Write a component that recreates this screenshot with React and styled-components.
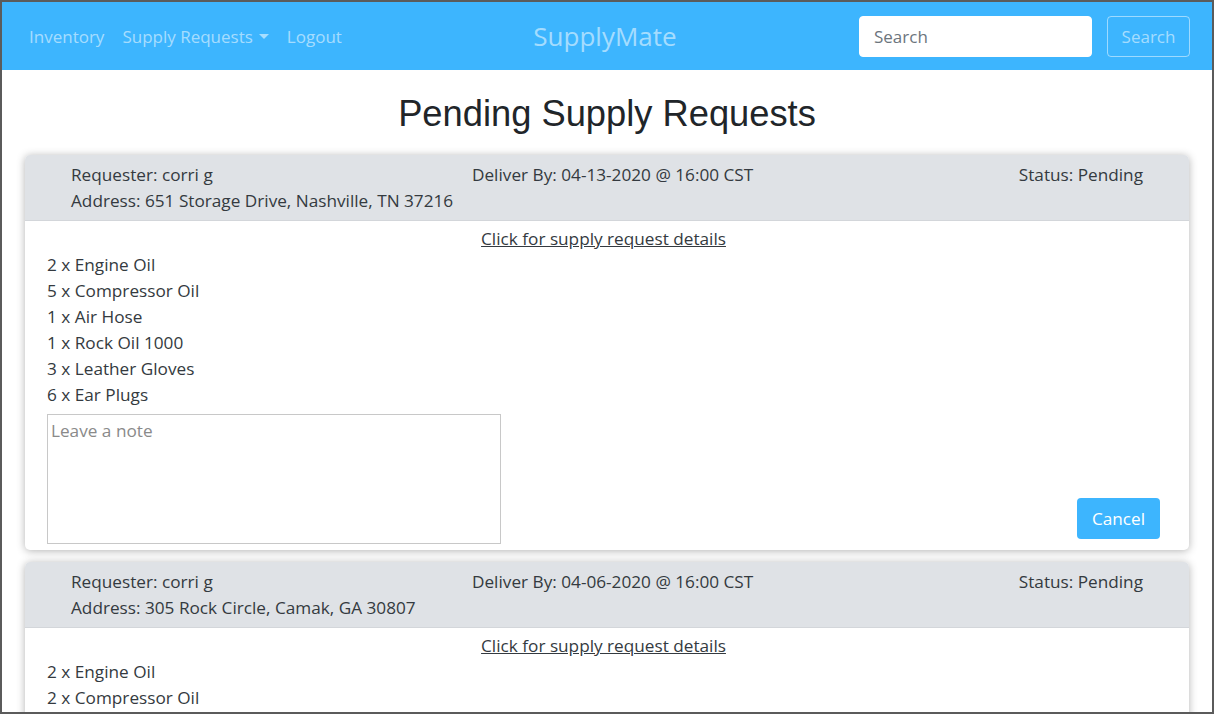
import styled, { createGlobalStyle } from 'styled-components';

const requests = [
  {
    requester: 'corri g',
    address: '651 Storage Drive, Nashville, TN 37216',
    deliverBy: '04-13-2020 @ 16:00 CST',
    status: 'Pending',
    items: [
      [2, 'Engine Oil'],
      [5, 'Compressor Oil'],
      [1, 'Air Hose'],
      [1, 'Rock Oil 1000'],
      [3, 'Leather Gloves'],
      [6, 'Ear Plugs'],
    ],
  },
  {
    requester: 'corri g',
    address: '305 Rock Circle, Camak, GA 30807',
    deliverBy: '04-06-2020 @ 16:00 CST',
    status: 'Pending',
    items: [
      [2, 'Engine Oil'],
      [2, 'Compressor Oil'],
      [1, 'Air Hose'],
    ],
  },
];

const App = () => {
  return (
    <>
      <GlobalStyle />
      <Frame>
        <Navbar>
          <NavLinks>
            <NavItem>Inventory</NavItem>
            <NavItem>
              Supply Requests <Caret />
            </NavItem>
            <NavItem>Logout</NavItem>
          </NavLinks>
          <Brand>SupplyMate</Brand>
          <SearchForm>
            <SearchInput placeholder="Search" />
            <SearchButton>Search</SearchButton>
          </SearchForm>
        </Navbar>
        <Main>
          <Title>Pending Supply Requests</Title>
          {requests.map((req, i) => (
            <Card key={i}>
              <CardHeader>
                <div>
                  <div>Requester: {req.requester}</div>
                  <div>Address: {req.address}</div>
                </div>
                <div>Deliver By: {req.deliverBy}</div>
                <div>Status: {req.status}</div>
              </CardHeader>
              <CardBody>
                <DetailsLink>Click for supply request details</DetailsLink>
                {req.items.map(([qty, name]) => (
                  <Item key={name}>
                    {qty} x {name}
                  </Item>
                ))}
                <Actions>
                  <Note placeholder="Leave a note" />
                  <CancelButton>Cancel</CancelButton>
                </Actions>
              </CardBody>
            </Card>
          ))}
        </Main>
      </Frame>
    </>
  );
};

const GlobalStyle = createGlobalStyle`
  html, body {
    margin: 0;
    padding: 0;
    overflow: hidden;
  }
  body {
    font-family: "Open Sans", "Noto Sans", sans-serif;
    color: #212529;
  }
`;

const Frame = styled.div`
  box-sizing: border-box;
  width: 1214px;
  height: 714px;
  border: 2px solid #5b5b5b;
  overflow: hidden;
  background: #fff;
`;

const Navbar = styled.nav`
  height: 68px;
  background: #3db5fe;
  display: grid;
  grid-template-columns: 1fr auto 1fr;
  align-items: center;
  padding: 0 22px 0 18px;
`;

const NavLinks = styled.div`
  display: flex;
  align-items: center;
`;

const NavItem = styled.a`
  color: rgba(255, 255, 255, 0.55);
  font-size: 17px;
  padding: 0 9px;
  display: flex;
  align-items: center;
  cursor: pointer;
`;

const Caret = styled.span`
  display: inline-block;
  margin-left: 6px;
  border-top: 5px solid rgba(255, 255, 255, 0.55);
  border-left: 5px solid transparent;
  border-right: 5px solid transparent;
`;

const Brand = styled.div`
  color: rgba(255, 255, 255, 0.55);
  font-size: 26px;
`;

const SearchForm = styled.div`
  display: flex;
  justify-content: flex-end;
  gap: 15px;
`;

const SearchInput = styled.input`
  box-sizing: border-box;
  width: 233px;
  height: 41px;
  border: 1px solid #fff;
  border-radius: 4px;
  padding: 0 14px;
  font-family: inherit;
  font-size: 17px;
  color: #495057;
  outline: none;

  &::placeholder {
    color: #6c757d;
  }
`;

const SearchButton = styled.button`
  box-sizing: border-box;
  width: 83px;
  height: 41px;
  background: transparent;
  border: 1px solid rgba(255, 255, 255, 0.5);
  border-radius: 4px;
  color: rgba(255, 255, 255, 0.55);
  font-family: inherit;
  font-size: 17px;
`;

const Main = styled.main`
  padding: 0 23px;
  display: flex;
  flex-direction: column;
  gap: 12px;
`;

const Title = styled.h1`
  margin: 18px 0 3px;
  text-align: center;
  font-family: "Liberation Sans", Arial, sans-serif;
  font-weight: 400;
  font-size: 36.3px;
  line-height: 52px;
`;

const Card = styled.section`
  border-radius: 5px;
  background: #fff;
  box-shadow: 0 1px 8px rgba(0, 0, 0, 0.3);
  overflow: hidden;
`;

const CardHeader = styled.header`
  display: grid;
  grid-template-columns: 401px 1fr auto;
  background: #dfe2e6;
  border-bottom: 1px solid #d3d6da;
  padding: 7px 46px 6px 46px;
  font-size: 17.2px;
  line-height: 26px;
  color: #343a40;
`;

const CardBody = styled.div`
  padding: 5px 29px 11px 22px;
  font-size: 17.2px;
  line-height: 26px;
  color: #343a40;
`;

const DetailsLink = styled.a`
  display: block;
  width: fit-content;
  margin: 0 auto;
  text-decoration: underline;
  cursor: pointer;
`;

const Item = styled.div``;

const Actions = styled.div`
  display: flex;
  justify-content: space-between;
  align-items: flex-end;
  margin-top: 6px;
`;

const Note = styled.textarea`
  box-sizing: border-box;
  width: 454px;
  height: 130px;
  margin: 0 0 -5px 0;
  border: 1px solid #c8c8c8;
  padding: 4px 3px;
  resize: none;
  font-family: inherit;
  font-size: 17.2px;
  line-height: 24px;

  &::placeholder {
    color: #8a8a8a;
  }
`;

const CancelButton = styled.button`
  width: 83px;
  height: 41px;
  background: #3db5fe;
  border: none;
  border-radius: 4px;
  color: #fff;
  font-family: inherit;
  font-size: 17.2px;
`;

export default App;
